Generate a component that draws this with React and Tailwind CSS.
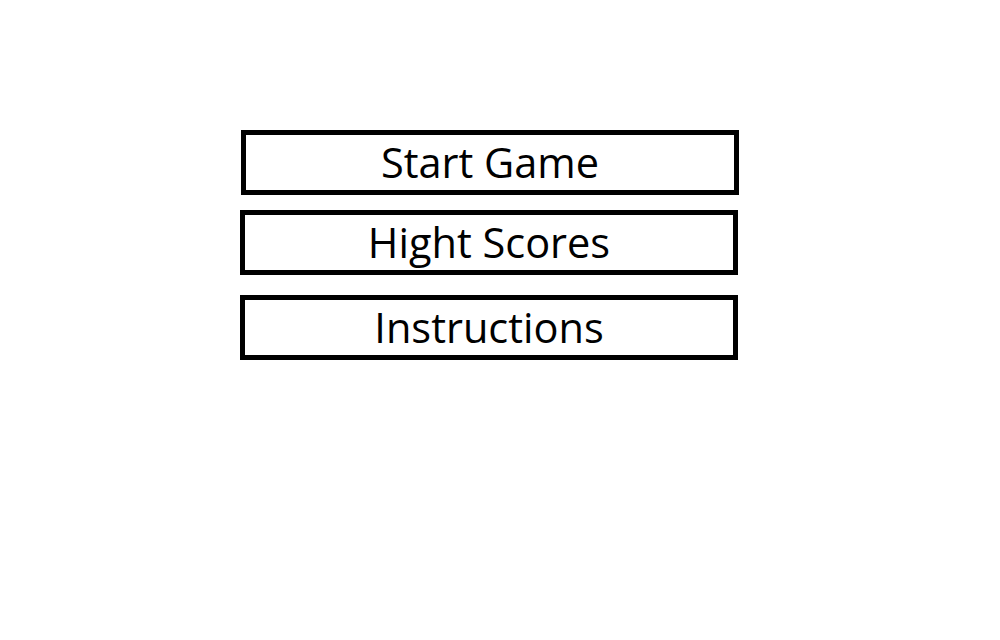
export default function App() {
  const font = { fontFamily: '"Open Sans", "Noto Sans", sans-serif' };
  return (
    <div className="w-[1000px] h-[640px] bg-white" style={font}>
      <div className="flex flex-col pt-[130px] pl-[240px]">
        <div className="ml-[1px] w-[498px] h-[65px] border-[5px] border-black flex items-center justify-center text-[41.5px] text-black leading-none">
          Start Game
        </div>
        <div className="mt-[15px] w-[498px] h-[65px] border-[5px] border-black flex items-center justify-center text-[41.5px] text-black leading-none">
          Hight Scores
        </div>
        <div className="mt-[20px] w-[498px] h-[65px] border-[5px] border-black flex items-center justify-center text-[41.5px] text-black leading-none">
          Instructions
        </div>
      </div>
    </div>
  );
}
